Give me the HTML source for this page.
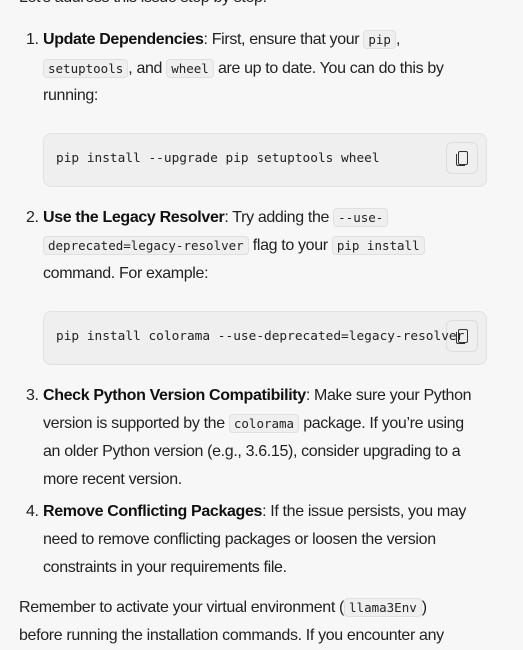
<!DOCTYPE html>
<html><head><meta charset="utf-8"><style>
html,body{margin:0;padding:0;background:#f7f7f7;width:523px;height:650px;overflow:hidden}
body{font-family:"Liberation Sans",sans-serif;font-size:16px;letter-spacing:-0.35px;color:#222;position:relative}
.l{position:absolute;left:43px;line-height:28px;height:28px;white-space:nowrap;margin-top:2px}
.n{position:absolute;left:26px;line-height:28px;margin-top:2px}
b{font-weight:bold;color:#111}
code{font-family:"DejaVu Sans Mono",monospace;font-size:12.5px;letter-spacing:0;background:#efefef;border:1px solid #e0e0e0;border-radius:4px;padding:1px 4px}
.cb{position:absolute;left:43px;width:444px;height:54px;background:#efefef;border:1px solid #e2e2e2;border-radius:8px;box-sizing:border-box}
.cb span{position:absolute;left:12px;top:17px;font-family:"DejaVu Sans Mono",monospace;font-size:12.8px;letter-spacing:0;color:#222;white-space:nowrap;z-index:2}
.cp{position:absolute;right:8px;top:8px;width:32px;height:32px;border:1px solid #ddd;border-radius:6px;box-sizing:border-box;background:#efefef}
.cp i{position:absolute;left:11px;top:8px;width:8px;height:12px;border:1.5px solid #333;border-radius:2px}
.cp s{position:absolute;left:9px;top:11px;width:8px;height:11px;border-left:1.5px solid #333;border-bottom:1.5px solid #333;border-radius:0 0 0 2px}
</style></head><body>
<div class="l" style="left:19px;top:-18px">Let's address this issue step by step:</div>

<div class="n" style="top:24px">1.</div>
<div class="l" style="top:24px"><b>Update Dependencies</b>: First, ensure that your <code>pip</code>,</div>
<div class="l" style="top:53px"><code>setuptools</code>, and <code>wheel</code> are up to date. You can do this by</div>
<div class="l" style="top:80px">running:</div>
<div class="cb" style="top:133px"><span>pip install --upgrade pip setuptools wheel</span><div class="cp"><i></i><s></s></div></div>

<div class="n" style="top:202px">2.</div>
<div class="l" style="top:202px"><b>Use the Legacy Resolver</b>: Try adding the <code>--use-</code></div>
<div class="l" style="top:230px"><code>deprecated=legacy-resolver</code> flag to your <code>pip install</code></div>
<div class="l" style="top:258px">command. For example:</div>
<div class="cb" style="top:311px"><span>pip install colorama --use-deprecated=legacy-resolver</span><div class="cp"><i></i><s></s></div></div>

<div class="n" style="top:380px">3.</div>
<div class="l" style="top:380px"><b>Check Python Version Compatibility</b>: Make sure your Python</div>
<div class="l" style="top:408px">version is supported by the <code>colorama</code> package. If you’re using</div>
<div class="l" style="top:436px">an older Python version (e.g., 3.6.15), consider upgrading to a</div>
<div class="l" style="top:464px">more recent version.</div>

<div class="n" style="top:496px">4.</div>
<div class="l" style="top:496px"><b>Remove Conflicting Packages</b>: If the issue persists, you may</div>
<div class="l" style="top:524px">need to remove conflicting packages or loosen the version</div>
<div class="l" style="top:552px">constraints in your requirements file.</div>

<div class="l" style="left:19px;top:592px">Remember to activate your virtual environment (<code>llama3Env</code>)</div>
<div class="l" style="left:19px;top:620px">before running the installation commands. If you encounter any</div>
</body></html>
